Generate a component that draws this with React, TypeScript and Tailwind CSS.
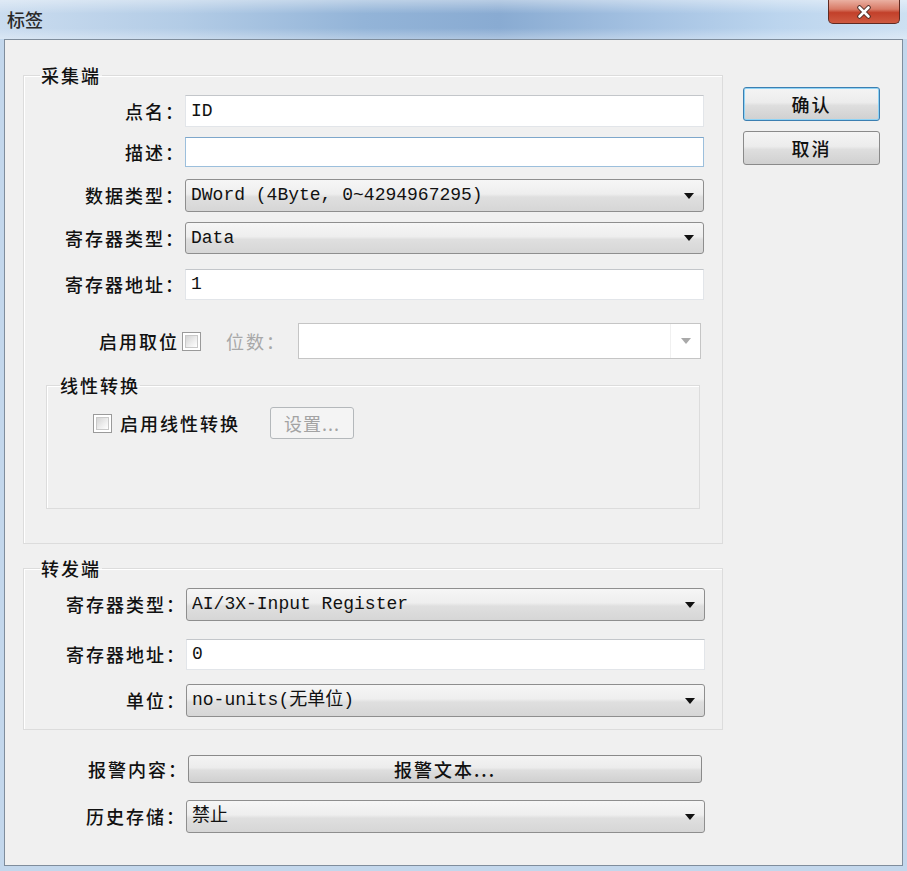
import React from "react";

const cjk = "font-['Noto_Sans_CJK_SC','Noto_Sans',sans-serif]";
const mono = "font-['Liberation_Mono','Noto_Sans_CJK_SC',monospace]";

const Arrow: React.FC<{ color?: string }> = ({ color = "#111" }) => (
    <svg width="10" height="6" viewBox="0 0 10 6" className="shrink-0">
        <path d="M0 0h10L5 6z" fill={color} />
    </svg>
);

const Combo: React.FC<{ value: string; h: string }> = ({ value, h }) => (
    <div
        className={`flex w-[519px] items-center rounded-[3px] border border-[#8e8e8e] bg-[linear-gradient(180deg,#f6f6f6_0%,#eeeeee_45%,#dfdfdf_55%,#d6d6d6_100%)] pl-[5px] pr-[9px] text-[18px] text-[#111] ${mono} ${h}`}
    >
        <span className="flex-1 truncate whitespace-pre">{value}</span>
        <Arrow />
    </div>
);

const Input: React.FC<{ value?: string; h: string; focus?: boolean }> = ({ value, h, focus }) => (
    <div
        className={`flex w-[519px] items-center border bg-white pl-[5px] text-[18px] text-[#111] ${mono} ${h} ${
            focus ? "border-[#9cbfdc] border-t-[#7ea7cb]" : "border-[#e2e5e9] border-t-[#c3c6ca]"
        }`}
    >
        {value}
    </div>
);

const Label: React.FC<{ text: string; w: string }> = ({ text, w }) => (
    <div className={`shrink-0 text-right text-[18px] font-medium tracking-[2px] text-[#111] ${w}`}>{text}</div>
);

const Check: React.FC = () => (
    <div className="h-[19px] w-[19px] shrink-0 border border-[#9a9a9a] bg-white p-[2px]">
        <div className="h-full w-full border border-[#c9c9c9] bg-[linear-gradient(135deg,#d4d4d4_0%,#efefef_60%,#ffffff_100%)]" />
    </div>
);

const Button: React.FC<{ text: string; def?: boolean; className: string }> = ({ text, def, className }) => (
    <div
        className={`flex items-center justify-center rounded-[3px] border bg-[linear-gradient(180deg,#f4f4f4_0%,#ececec_45%,#dedede_55%,#d0d0d0_100%)] text-[18px] font-medium tracking-[2px] text-[#111] ${className} ${
            def ? "border-[#3c7fb1] shadow-[inset_0_0_0_1px_#8fd3f5]" : "border-[#8a8a8a]"
        }`}
    >
        {text}
    </div>
);

export default function App() {
    return (
        <div className={`flex h-[871px] w-[907px] flex-col bg-[#c3d7ec] ${cjk}`}>
            {/* title bar */}
            <div className="relative h-[39px] shrink-0 bg-[linear-gradient(180deg,rgba(255,255,255,0.4)_0%,rgba(255,255,255,0)_35%,rgba(255,255,255,0)_72%,rgba(255,255,255,0.3)_100%),linear-gradient(90deg,#cadcef_0%,#b3cce6_20%,#93b4d8_40%,#89abd2_55%,#a6c3e3_72%,#bcd5ee_86%,#cde0f2_100%)]">
                <div className="pl-[7px] pt-[7px] text-[18px] font-medium leading-[24px] text-[#2a2a2a]">标签</div>
                <div className="absolute left-[828px] top-0 flex h-[24px] w-[72px] items-center justify-center rounded-b-[5px] border border-t-0 border-[#5f2a22] bg-[linear-gradient(180deg,#eab0a2_0%,#d87a66_40%,#c2402a_55%,#cf5a41_100%)]">
                    <svg width="16" height="14" viewBox="0 0 16 14">
                        <path d="M3.5 2.5l9 9M12.5 2.5l-9 9" stroke="#4a2a24" strokeWidth="4.5" strokeLinecap="round" />
                        <path d="M3.5 2.5l9 9M12.5 2.5l-9 9" stroke="#ffffff" strokeWidth="2.6" strokeLinecap="round" />
                    </svg>
                </div>
            </div>

            {/* client area */}
            <div className="mx-[4px] flex h-[827px] shrink-0 border border-[#7f8d9c] bg-[#f0f0f0]">
                <div className="flex w-[738px] shrink-0 flex-col pl-[18px] pt-[26px]">
                    {/* 采集端 */}
                    <fieldset className="w-[700px] border border-[#dcdcdc] px-0 pb-[34px] pt-[11px] shadow-[inset_1px_1px_0_#ffffff]">
                        <legend className="ml-[16px] px-[1px] text-[18px] font-medium leading-[18px] tracking-[2px] text-[#111]">采集端</legend>
                        <div className="flex flex-col">
                            <div className="flex h-[32px] items-center">
                                <Label text="点名：" w="w-[161px]" />
                                <Input value="ID" h="h-[32px]" />
                            </div>
                            <div className="mt-[10px] flex h-[30px] items-center">
                                <Label text="描述：" w="w-[161px]" />
                                <Input h="h-[30px]" focus />
                            </div>
                            <div className="mt-[12px] flex h-[33px] items-center">
                                <Label text="数据类型：" w="w-[161px]" />
                                <Combo value="DWord (4Byte, 0~4294967295)" h="h-[33px]" />
                            </div>
                            <div className="mt-[10px] flex h-[32px] items-center">
                                <Label text="寄存器类型：" w="w-[161px]" />
                                <Combo value="Data" h="h-[32px]" />
                            </div>
                            <div className="mt-[15px] flex h-[31px] items-center">
                                <Label text="寄存器地址：" w="w-[161px]" />
                                <Input value="1" h="h-[31px]" />
                            </div>
                            <div className="mt-[23px] flex h-[36px] items-center">
                                <Label text="启用取位" w="w-[155px]" />
                                <div className="ml-[3px]">
                                    <Check />
                                </div>
                                <div className="ml-[25px] w-[72px] text-[18px] tracking-[2px] text-[#a8a8a8]">位数：</div>
                                <div className="flex h-[36px] w-[403px] items-center border border-[#c5c5c5] bg-white">
                                    <div className="flex-1" />
                                    <div className="flex h-full w-[30px] items-center justify-center border-l border-[#f0f0f0]">
                                        <Arrow color="#a9a9a9" />
                                    </div>
                                </div>
                            </div>

                            {/* 线性转换 */}
                            <fieldset className="mx-[22px] mt-[17px] border border-[#dcdcdc] pb-[69px] pt-[13px] shadow-[inset_1px_1px_0_#ffffff]">
                                <legend className="ml-[13px] text-[18px] font-medium leading-[18px] tracking-[2px] text-[#111]">线性转换</legend>
                                <div className="flex h-[32px] items-center">
                                    <div className="ml-[46px]">
                                        <Check />
                                    </div>
                                    <div className="ml-[8px] text-[18px] font-medium tracking-[2px] text-[#111]">启用线性转换</div>
                                    <div className="ml-[30px] flex h-[32px] w-[84px] items-center justify-center rounded-[3px] border border-[#b4b8bb] bg-[#f4f4f4] text-[18px] tracking-[1px] text-[#a3a3a3]">
                                        设置...
                                    </div>
                                </div>
                            </fieldset>
                        </div>
                    </fieldset>

                    {/* 转发端 */}
                    <fieldset className="mt-[15px] w-[700px] border border-[#dcdcdc] pb-[12px] pt-[11px] shadow-[inset_1px_1px_0_#ffffff]">
                        <legend className="ml-[16px] px-[1px] text-[18px] font-medium leading-[18px] tracking-[2px] text-[#111]">转发端</legend>
                        <div className="flex flex-col">
                            <div className="flex h-[33px] items-center">
                                <Label text="寄存器类型：" w="w-[162px]" />
                                <Combo value="AI/3X-Input Register" h="h-[33px]" />
                            </div>
                            <div className="mt-[18px] flex h-[31px] items-center">
                                <Label text="寄存器地址：" w="w-[162px]" />
                                <Input value="0" h="h-[31px]" />
                            </div>
                            <div className="mt-[14px] flex h-[33px] items-center">
                                <Label text="单位：" w="w-[162px]" />
                                <Combo value="no-units(无单位)" h="h-[33px]" />
                            </div>
                        </div>
                    </fieldset>

                    <div className="mt-[25px] flex h-[28px] items-center">
                        <Label text="报警内容：" w="w-[165px]" />
                        <Button text="报警文本..." className="h-[28px] w-[514px]" />
                    </div>
                    <div className="mt-[17px] flex h-[33px] items-center">
                        <Label text="历史存储：" w="w-[163px]" />
                        <Combo value="禁止" h="h-[33px]" />
                    </div>
                </div>

                <div className="flex flex-col pt-[47px]">
                    <Button text="确认" def className="h-[34px] w-[137px]" />
                    <Button text="取消" className="mt-[10px] h-[34px] w-[137px]" />
                </div>
            </div>
        </div>
    );
}
